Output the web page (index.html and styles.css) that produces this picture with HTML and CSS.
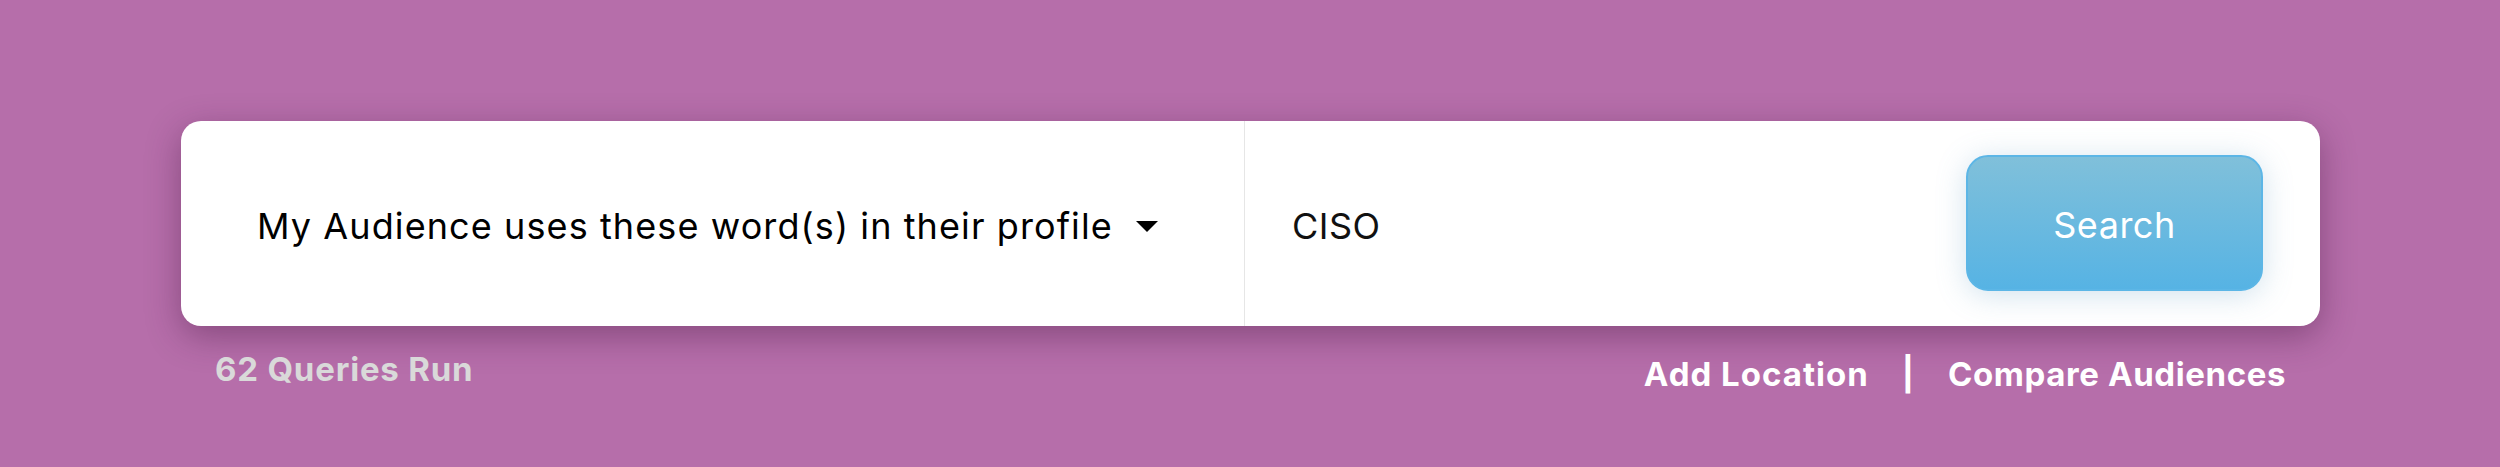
FILE: index.html
```html
<!DOCTYPE html>
<html>
<head>
<meta charset="utf-8">
<link rel="stylesheet" href="styles.css">
</head>
<body>
<div class="page">
  <div class="card">
    <div class="select-part">
      <span class="select-text">My Audience uses these word(s) in their profile</span>
      <svg class="caret" width="22" height="11" viewBox="0 0 22 11"><polygon points="0,0 22,0 11,11" fill="#000"/></svg>
    </div>
    <div class="query-part">
      <span class="query-text">CISO</span>
      <button class="search-btn">Search</button>
    </div>
  </div>
  <div class="below">
    <span class="count">62 Queries Run</span>
    <div class="links">
      <span class="link">Add Location</span>
      <span class="sep">|</span>
      <span class="link compare">Compare Audiences</span>
    </div>
  </div>
</div>
</body>
</html>
```
FILE: styles.css
```css
html, body {
  margin: 0;
  padding: 0;
}
body {
  background: #b66eaa;
  width: 2500px;
  height: 467px;
  overflow: hidden;
  font-family: "Inter", "DejaVu Sans", sans-serif;
}
.page {
  padding-top: 121px;
  padding-left: 181px;
  width: 2139px;
}
.card {
  height: 205px;
  background: #fff;
  border-radius: 20px;
  display: flex;
  box-shadow: 0 10px 34px rgba(70, 25, 65, 0.42);
}
.select-part {
  width: 987px;
  padding-left: 76px;
  border-right: 1px solid #e6e6e6;
  display: flex;
  align-items: center;
  padding-top: 5px;
}
.select-text {
  font-size: 36px;
  color: #000;
  letter-spacing: 1.1px;
}
.caret {
  margin-left: 23px;
  margin-top: 0;
}
.query-part {
  flex: 1;
  display: flex;
  align-items: center;
  padding-left: 47px;
  padding-right: 57px;
}
.query-text {
  flex: 1;
  font-size: 36px;
  color: #111;
  letter-spacing: 0.5px;
  padding-top: 4px;
}
.search-btn {
  width: 297px;
  height: 136px;
  border-radius: 22px;
  border: 2px solid #5cb6e6;
  background: linear-gradient(#80c0da, #56b3e4);
  color: #fff;
  font-family: inherit;
  font-size: 36px;
  font-weight: 400;
  letter-spacing: 0.5px;
  box-shadow: 0 4px 30px rgba(90, 150, 190, 0.28);
  margin-top: -2px;
  padding-top: 6px;
}
.below {
  display: flex;
  justify-content: space-between;
  padding: 0 34px;
}
.count {
  margin-top: 23px;
  font-size: 33px;
  font-weight: 700;
  color: #d9d9d9;
  letter-spacing: 0.8px;
}
.links {
  margin-top: 28px;
  display: flex;
  color: #fff;
  font-size: 33px;
  font-weight: 700;
  letter-spacing: 1px;
}
.compare {
  letter-spacing: 0.6px;
}
.sep {
  margin: 0 33px 0 33px;
}
```
